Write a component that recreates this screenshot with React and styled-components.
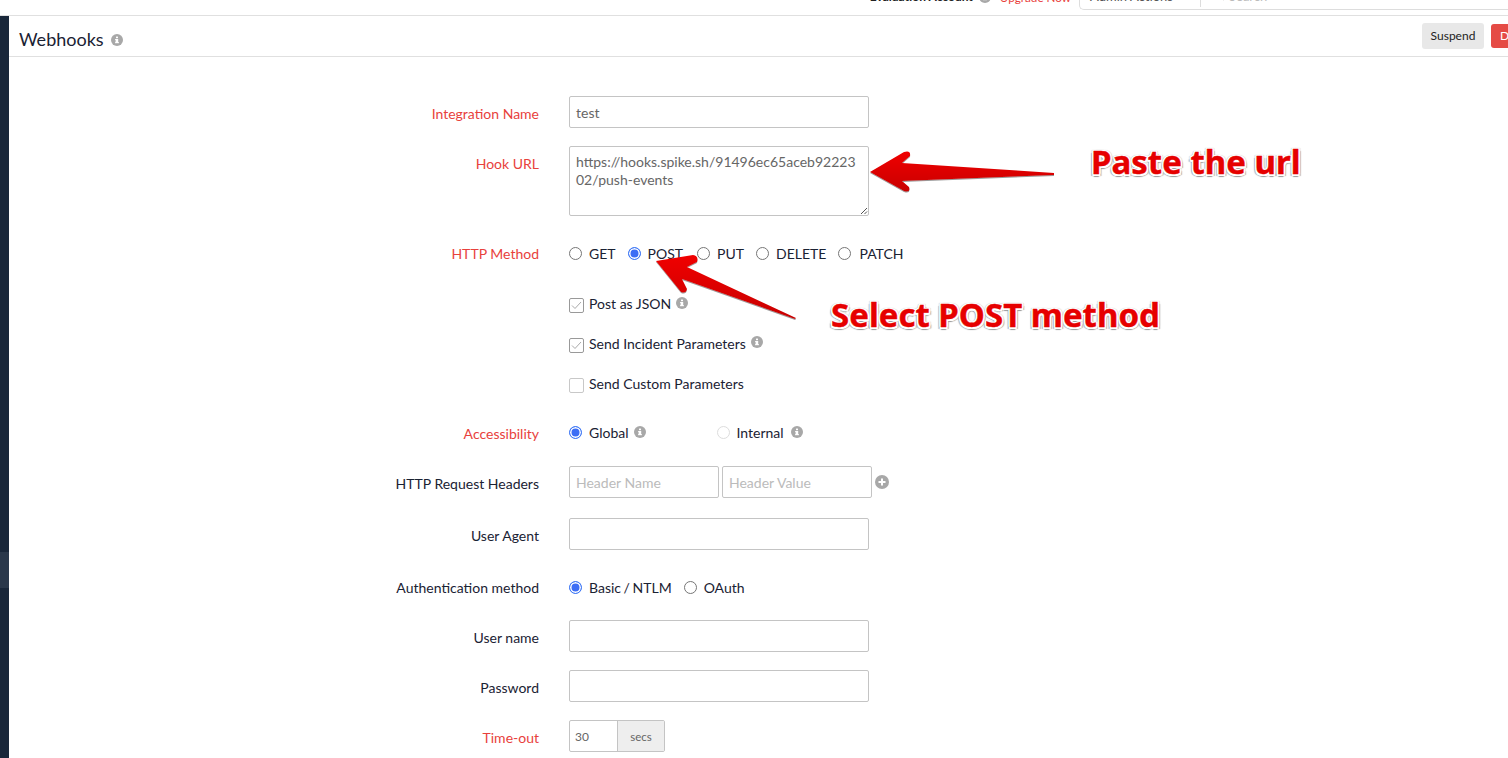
import React from "react";
import styled, { createGlobalStyle } from "styled-components";

const Global = createGlobalStyle`
  html, body { margin: 0; padding: 0; height: 100%; background: #fff; overflow: hidden; }
  body { font-family: Lato, "Liberation Sans", sans-serif; font-size: 14px; color: #1a2233; }
  * { box-sizing: border-box; }
`;

const Page = styled.div`
  position: relative;
  width: 1508px;
  height: 758px;
  overflow: hidden;
`;
const TopBar = styled.div`
  height: 16px;
  border-bottom: 1px solid #e0e0e0;
  display: flex;
  align-items: flex-end;
  justify-content: flex-end;
  overflow: hidden;
`;
const TopInner = styled.div`
  display: flex;
  align-items: flex-end;
  height: 29px;
  margin-bottom: 5px;
  font-size: 12px;
`;
const AccountInfo = styled.div`
  display: flex;
  align-items: center;
  height: 15px;
  margin-bottom: 6px;
`;
const Account = styled.span`
  font-weight: 700;
  color: #222;
`;
const Upgrade = styled.span`
  color: #e8413c;
  font-size: 11.7px;
  margin: 0 8px 0 9px;
`;
const SearchBox = styled.div`
  width: 429px;
  height: 29px;
  border: 1px solid #ddd;
  border-right: none;
  border-radius: 0 0 0 5px;
  display: flex;
  align-items: center;
  color: #555;
  font-size: 13px;
`;
const SearchScope = styled.div`
  width: 121px;
  height: 22px;
  padding-left: 10px;
  border-right: 1px solid #ddd;
  display: flex;
  align-items: center;
`;
const SearchHint = styled.div`
  padding-left: 13px;
  color: #bbb;
  display: flex;
  align-items: center;
  gap: 4px;
`;
const Body = styled.div`
  display: flex;
  height: 742px;
`;
const Sidebar = styled.div`
  width: 9px;
  flex: none;
  background: #19273a;
  display: flex;
  flex-direction: column;
  padding-top: 536px;
`;
const SideActive = styled.div`
  height: 36px;
  background: #2a384b;
`;
const Main = styled.div`
  flex: 1;
  min-width: 0;
`;
const Header = styled.div`
  height: 41px;
  border-bottom: 1px solid #e0e0e0;
  display: flex;
  align-items: center;
  padding: 6px 0 0 10px;
`;
const Title = styled.h1`
  margin: 0;
  font-size: 18px;
  font-weight: 400;
  line-height: 24px;
  color: #1a2233;
`;
const HeaderActions = styled.div`
  margin-left: auto;
  display: flex;
  align-items: center;
  gap: 7px;
  margin-right: -47px;
  margin-top: -7px;
`;
const ActionBtn = styled.button`
  height: ${(p) => (p.$danger ? 24 : 26)}px;
  width: ${(p) => p.$w}px;
  flex: none;
  border: none;
  border-radius: 3px;
  font-family: inherit;
  font-size: 12px;
  background: ${(p) => (p.$danger ? "#e54b45" : "#e8e8e8")};
  color: ${(p) => (p.$danger ? "#fff" : "#222")};
  text-align: ${(p) => (p.$danger ? "left" : "center")};
  padding: 0 0 0 ${(p) => (p.$danger ? 9 : 0)}px;
`;
const Form = styled.div`
  display: grid;
  grid-template-columns: 530px 1fr;
  column-gap: 30px;
  padding-top: 39px;
  align-items: start;
`;
const Label = styled.div`
  text-align: right;
  line-height: 20px;
  padding-top: 8px;
  height: ${(p) => p.$h}px;
  color: ${(p) => (p.$required ? "#e8413c" : "#1a2233")};
`;
const Field = styled.div`
  height: ${(p) => p.$h}px;
  padding-top: ${(p) => p.$pt ?? 0}px;
  display: flex;
  align-items: flex-start;
`;
const InputPair = styled.div`
  display: flex;
  gap: 3px;
`;
const TextInput = styled.div`
  width: ${(p) => p.$w || 300}px;
  height: 32px;
  border: 1px solid #c4c4c4;
  border-radius: 2px;
  padding: 0 6px;
  line-height: 32px;
  color: ${(p) => (p.$placeholder ? "#bbb" : "#666")};
  flex: none;
`;
const Textarea = styled.div`
  position: relative;
  width: 300px;
  height: 70px;
  border: 1px solid #c4c4c4;
  border-radius: 2px;
  padding: 6px 6px;
  line-height: 18px;
  color: #666;
  word-break: break-all;
`;
const Grip = styled.svg`
  position: absolute;
  right: 0;
  bottom: 0;
  width: 9px;
  height: 9px;
`;
const Choice = styled.label`
  display: inline-flex;
  align-items: center;
  height: 20px;
  margin-right: ${(p) => p.$mr ?? 12}px;
  color: #1a2233;
  word-spacing: ${(p) => p.$ws ?? 0}px;
`;
const RadioDot = styled.span`
  flex: none;
  width: 13px;
  height: 13px;
  border-radius: 50%;
  margin-right: ${(p) => p.$mr ?? 7}px;
  border: 1px solid ${(p) => (p.$on ? "#3d78f5" : p.$off ? "#ddd" : "#767676")};
  background: ${(p) => (p.$on ? "#3d6ef5" : "#fff")};
  box-shadow: ${(p) => (p.$on ? "inset 0 0 0 1.5px #fff" : "none")};
`;
const Box = styled.span`
  flex: none;
  width: 15px;
  height: 15px;
  margin-right: 5px;
  border: 1px solid ${(p) => (p.$on ? "#999" : "#c8c8c8")};
  border-radius: 2px;
  display: flex;
  align-items: center;
  justify-content: center;
  transform: translateY(2px);
`;
const InfoDot = styled.svg`
  width: 12px;
  height: 12px;
  flex: none;
  margin-left: ${(p) => p.$ml ?? 5}px;
  transform: translateY(${(p) => p.$dy ?? 0}px);
`;
const Gap = styled.span`
  width: ${(p) => p.$w}px;
  flex: none;
`;
const PlusBtn = styled.svg`
  width: 14px;
  height: 14px;
  margin: 9px 0 0 3px;
  flex: none;
`;
const Group = styled.div`
  display: flex;
  width: 96px;
  height: 32px;
  border: 1px solid #c4c4c4;
  border-radius: 2px;
  overflow: hidden;
  font-size: 12px;
`;
const GroupValue = styled.div`
  width: 47px;
  padding-left: 5px;
  line-height: 32px;
  color: #666;
`;
const GroupAddon = styled.div`
  flex: 1;
  background: #eee;
  border-left: 1px solid #c4c4c4;
  text-align: center;
  line-height: 32px;
  font-size: 11.5px;
  color: #666;
`;
const Overlay = styled.svg`
  position: absolute;
  left: 0;
  top: 0;
  width: 1508px;
  height: 758px;
  pointer-events: none;
`;
const Callout = styled.div`
  position: absolute;
  left: ${(p) => p.$x}px;
  top: ${(p) => p.$y}px;
  font-family: "Noto Sans", "Open Sans", sans-serif;
  font-weight: 700;
  font-size: 33px;
  line-height: 40px;
  white-space: nowrap;
  color: #e60000;
  -webkit-text-stroke: 0.4px #e60000;
  text-shadow: 1.5px 0 0 #fff, -1.5px 0 0 #fff, 0 -1.5px 0 #fff, 0 1.5px 0 #fff,
    1.5px 1.5px 0 #fff, -1.5px 1.5px 0 #fff, 1.5px -1.5px 0 #fff, -1.5px -1.5px 0 #fff,
    0 3px 1px #999, 2.5px 2px 1px #aaa, -2.5px 2px 1px #aaa, 2px -1px 1px #ccc, -2px -1px 1px #ccc;
`;

const Info = (p) => (
  <InfoDot viewBox="0 0 12 12" {...p}>
    <circle cx="6" cy="6" r="6" fill="#a8a8a8" />
    <rect x="4.6" y="5" width="2.6" height="4" fill="#fff" />
    <rect x="4" y="8.2" width="4" height="1" fill="#fff" />
    <rect x="4.2" y="5" width="1.5" height="1" fill="#fff" />
    <rect x="5" y="2.6" width="2" height="1.6" fill="#fff" />
  </InfoDot>
);
const Check = ({ on }) => (
  <Box $on={on}>
    {on && (
      <svg width="11" height="9" viewBox="0 0 11 9">
        <path d="M1 4.5 L4 7.5 L10 1" fill="none" stroke="#aaa" strokeWidth="1" />
      </svg>
    )}
  </Box>
);

const redGrad = "url(#redArrow)";

export default function App() {
  return (
    <Page>
      <Global />
      <TopBar>
        <TopInner>
          <AccountInfo>
            <Account>Evaluation Account</Account>
            <Info $ml={6} />
            <Upgrade>Upgrade Now</Upgrade>
          </AccountInfo>
          <SearchBox>
            <SearchScope>Admin Actions</SearchScope>
            <SearchHint>
              <svg width="11" height="11" viewBox="0 0 11 11">
                <circle cx="4.5" cy="4.5" r="3.5" fill="none" stroke="#bbb" strokeWidth="1.4" />
                <path d="M7 7 L10 10" stroke="#bbb" strokeWidth="1.4" />
              </svg>
              Search
            </SearchHint>
          </SearchBox>
        </TopInner>
      </TopBar>
      <Body>
        <Sidebar>
          <SideActive />
        </Sidebar>
        <Main>
          <Header>
            <Title>Webhooks</Title>
            <Info $ml={7} $dy={1} />
            <HeaderActions>
              <ActionBtn $w={62}>Suspend</ActionBtn>
              <ActionBtn $danger $w={64}>Delete</ActionBtn>
            </HeaderActions>
          </Header>
          <Form>
            <Label $required $h={50}>Integration Name</Label>
            <Field $h={50}><TextInput>test</TextInput></Field>

            <Label $required $h={90}>Hook URL</Label>
            <Field $h={90}>
              <Textarea>
                https://hooks.spike.sh/91496ec65aceb9222302/push-events
                <Grip viewBox="0 0 9 9">
                  <path d="M8 2 L2 8 M8 5.5 L5.5 8" stroke="#555" strokeWidth="1" />
                </Grip>
              </Textarea>
            </Field>

            <Label $required $h={57}>HTTP Method</Label>
            <Field $h={57} $pt={7}>
              <Choice><RadioDot />GET</Choice>
              <Choice $mr={14}><RadioDot $on />POST</Choice>
              <Choice><RadioDot />PUT</Choice>
              <Choice><RadioDot />DELETE</Choice>
              <Choice><RadioDot $mr={8} />PATCH</Choice>
            </Field>

            <Label $h={40} />
            <Field $h={40}><Choice><Check on />Post as JSON<Info /></Choice></Field>
            <Label $h={40} />
            <Field $h={40}><Choice><Check on />Send Incident Parameters<Info $dy={-1} /></Choice></Field>
            <Label $h={43} />
            <Field $h={43}><Choice><Check />Send Custom Parameters</Choice></Field>

            <Label $required $h={50}>Accessibility</Label>
            <Field $h={50} $pt={6}>
              <Choice $mr={0}><RadioDot $on />Global<Info /></Choice>
              <Gap $w={71} />
              <Choice $mr={0}><RadioDot $off />Internal<Info $ml={7} /></Choice>
            </Field>

            <Label $h={52}>HTTP Request Headers</Label>
            <Field $h={52}>
              <InputPair>
                <TextInput $w={150} $placeholder>Header Name</TextInput>
                <TextInput $w={150} $placeholder>Header Value</TextInput>
              </InputPair>
              <PlusBtn viewBox="0 0 14 14">
                <circle cx="7" cy="7" r="7" fill="#a8a8a8" />
                <path d="M7 3.5 V10.5 M3.5 7 H10.5" stroke="#fff" strokeWidth="2" />
              </PlusBtn>
            </Field>

            <Label $h={52}>User Agent</Label>
            <Field $h={52}><TextInput /></Field>

            <Label $h={50}>Authentication method</Label>
            <Field $h={50} $pt={7}>
              <Choice $ws={-1}><RadioDot $on />Basic / NTLM</Choice>
              <Choice><RadioDot />OAuth</Choice>
            </Field>

            <Label $h={50}>User name</Label>
            <Field $h={50}><TextInput /></Field>
            <Label $h={50}>Password</Label>
            <Field $h={50}><TextInput /></Field>
            <Label $required $h={38}>Time-out</Label>
            <Field $h={38}>
              <Group>
                <GroupValue>30</GroupValue>
                <GroupAddon>secs</GroupAddon>
              </Group>
            </Field>
          </Form>
        </Main>
      </Body>
      <Overlay viewBox="0 0 1508 758">
        <defs>
          <linearGradient id="redArrow" x1="0" y1="0" x2="0" y2="1">
            <stop offset="0" stopColor="#f00000" />
            <stop offset="1" stopColor="#c80000" />
          </linearGradient>
          <filter id="arrowShadow" x="-10%" y="-20%" width="120%" height="150%">
            <feDropShadow dx="0" dy="1" stdDeviation="0.6" floodColor="#555" floodOpacity="0.6" />
          </filter>
        </defs>
        <path
          d="M870 172 L904 152 Q911 150 910 156 L902 163 L1054 173 L1054 175 L902 181 L909 187 Q911 193 904 191 Z"
          fill={redGrad}
          filter="url(#arrowShadow)"
        />
        <path
          d="M656 261 L693 255 Q699 256 697 262 L687 267 L796 318 L795 319 L682 279 L687 289 Q686 294 681 292 Z"
          fill={redGrad}
          filter="url(#arrowShadow)"
        />
      </Overlay>
      <Callout $x={1091} $y={142}>Paste the url</Callout>
      <Callout $x={831} $y={295}>Select POST method</Callout>
    </Page>
  );
}
